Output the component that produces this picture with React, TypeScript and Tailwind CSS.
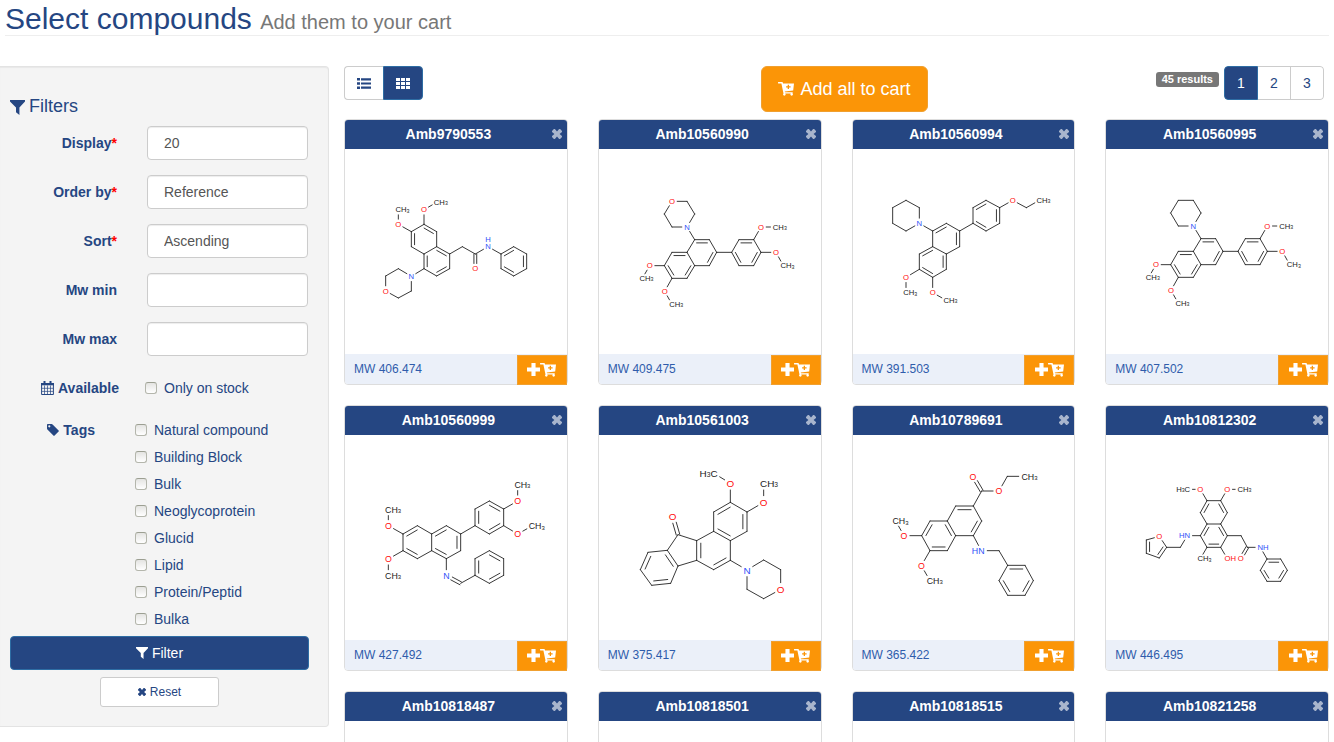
import type { ReactNode } from 'react';

/* ---------- icons ---------- */

type IconProps = { className?: string };

const FilterIcon = ({ className }: IconProps) => (
  <svg viewBox="0 0 14 14" className={className} fill="currentColor" aria-hidden="true">
    <path d="M0 0h14v1.400L8.800 7v7L5.600 11.400V7L0 1.400z" />
  </svg>
);

const ListIcon = ({ className }: IconProps) => (
  <svg viewBox="0 0 14 11" className={className} fill="currentColor" aria-hidden="true">
    <path d="M0 0h3v2.600H0zM4 .2h10v2.200H4zM0 4.200h3v2.600H0zM4 4.400h10v2.200H4zM0 8.400h3V11H0zM4 8.600h10v2.200H4z" />
  </svg>
);

const GridIcon = ({ className }: IconProps) => (
  <svg viewBox="0 0 14 11" className={className} fill="currentColor" aria-hidden="true">
    <path d="M0 0h4v3H0zM5 0h4v3H5zM10 0h4v3h-4zM0 4h4v3H0zM5 4h4v3H5zM10 4h4v3h-4zM0 8h4v3H0zM5 8h4v3H5zM10 8h4v3h-4z" />
  </svg>
);

const CrossIcon = ({ className }: IconProps) => (
  <svg viewBox="0 0 10 10" className={className} fill="currentColor" aria-hidden="true">
    <path d="M0 1.900 1.900 0h1L5 2.400 7.100 0h1L10 1.900v1L7.600 5 10 7.100v1L8.100 10h-1L5 7.600 2.900 10h-1L0 8.100v-1L2.400 5 0 2.900z" />
  </svg>
);

const PlusIcon = ({ className }: IconProps) => (
  <svg viewBox="0 0 12 12" className={className} fill="currentColor" aria-hidden="true">
    <path d="M4.100 0h3.800v4.100H12v3.800H7.900V12H4.100V7.900H0V4.100h4.100z" />
  </svg>
);

const CartIcon = ({ className }: IconProps) => (
  <svg viewBox="0 0 16 14" className={className} fill="currentColor" aria-hidden="true">
    <path
      fillRule="evenodd"
      d="M.5 0h4l.6 1.400H16l-.8 7.200-8.400.8.2.9h7.700v1.300h-.2a1.200 1.200 0 1 1-1.700 0H7.200a1.200 1.200 0 1 1-1.700 0L3.400 1.500H.5a.75.75 0 0 1 0-1.500zM9.700 2.700v1.600H8.100v1.200h1.600v1.600h1.300V5.500h1.600V4.300H11V2.700z"
    />
  </svg>
);

const CalendarIcon = ({ className }: IconProps) => (
  <svg viewBox="0 0 13 14" className={className} fill="none" stroke="currentColor" aria-hidden="true">
    <path d="M.6 2.500h11.800v11H.6z" strokeWidth="1" />
    <path d="M0 2h13v2.300H0z" fill="currentColor" stroke="none" />
    <path d="M3.500 0v3.500M9.500 0v3.500" strokeWidth="2" />
    <path d="M1 7.300h11M1 10.400h11M3.500 4.500v9M6.500 4.500v9M9.500 4.500v9" strokeWidth=".7" />
  </svg>
);

const TagIcon = ({ className }: IconProps) => (
  <svg viewBox="0 0 12 12" className={className} fill="currentColor" aria-hidden="true">
    <path
      fillRule="evenodd"
      d="M0 .8Q0 0 .8 0h3.800q.6 0 1 .4l6 6q.6.6 0 1.200l-4 4q-.6.6-1.200 0l-6-6Q0 5.200 0 4.600zM2.300 1.200a1.100 1.100 0 1 0 0 2.200 1.100 1.100 0 0 0 0-2.200z"
    />
  </svg>
);

/* ---------- structure drawings ---------- */

type Atom = [number, number, string?];
type Ring = { atoms: number[]; doubles?: number[] };
type Molecule = {
  view: [number, number];
  size: number;
  atoms: Atom[];
  rings: Ring[];
  bonds: [number, number, 2?][];
};

const RED = '#ff0d0d';
const BLUE = '#3050f8';
const INK = '#222222';

const labelInk = (label: string) =>
  label.startsWith('O') ? RED : label.includes('N') ? BLUE : INK;

function AtomLabel({ atom, bondSize }: { atom: Atom; bondSize: number }) {
  const [x, y, label = ''] = atom;
  const size = bondSize * 1.1;
  const half = size * 0.37;
  const base = y + size * 0.36;
  const common = { fontSize: size, fill: labelInk(label) };
  const sub = { fontSize: size * 0.68 };
  if (label === 'CH3')
    return (
      <text x={x - half} y={base} {...common}>
        CH<tspan {...sub} dy="1">3</tspan>
      </text>
    );
  if (label === 'H3C')
    return (
      <text x={x + half} y={base} textAnchor="end" {...common}>
        H<tspan {...sub} dy="1">3</tspan>
        <tspan dy="-1">C</tspan>
      </text>
    );
  if (label === 'N/H')
    return (
      <>
        <text x={x} y={base} textAnchor="middle" {...common}>N</text>
        <text x={x} y={base - bondSize} textAnchor="middle" {...common}>H</text>
      </>
    );
  if (label === 'HN')
    return <text x={x + half} y={base} textAnchor="end" {...common}>HN</text>;
  if (label.length === 2)
    return <text x={x - half} y={base} {...common}>{label}</text>;
  return <text x={x} y={base} textAnchor="middle" {...common}>{label}</text>;
}

function Structure({ molecule, name }: { molecule: Molecule; name: string }) {
  const { atoms, rings, bonds, size, view } = molecule;
  const lines: ReactNode[] = [];
  const seen = new Set<string>();

  const draw = (i: number, j: number, dx = 0, dy = 0, inset = 0) => {
    const [ax, ay, al] = atoms[i];
    const [bx, by, bl] = atoms[j];
    const len = Math.hypot(bx - ax, by - ay);
    const ux = (bx - ax) / len;
    const uy = (by - ay) / len;
    const s = al ? size * 0.74 : inset;
    const e = bl ? size * 0.74 : inset;
    lines.push(
      <line
        key={lines.length}
        x1={ax + ux * s + dx}
        y1={ay + uy * s + dy}
        x2={bx - ux * e + dx}
        y2={by - uy * e + dy}
      />,
    );
  };

  rings.forEach((ring) => {
    const n = ring.atoms.length;
    const cx = ring.atoms.reduce((t, a) => t + atoms[a][0], 0) / n;
    const cy = ring.atoms.reduce((t, a) => t + atoms[a][1], 0) / n;
    ring.atoms.forEach((a, k) => {
      const b = ring.atoms[(k + 1) % n];
      const key = [a, b].sort((p, q) => p - q).join('-');
      if (!seen.has(key)) {
        seen.add(key);
        draw(a, b);
      }
      if (ring.doubles?.includes(k)) {
        const mx = cx - (atoms[a][0] + atoms[b][0]) / 2;
        const my = cy - (atoms[a][1] + atoms[b][1]) / 2;
        const m = Math.hypot(mx, my);
        const gap = size * 0.46;
        draw(a, b, (mx / m) * gap, (my / m) * gap, size * 0.28);
      }
    });
  });

  bonds.forEach(([i, j, order]) => {
    if (order !== 2) return draw(i, j);
    const [ax, ay] = atoms[i];
    const [bx, by] = atoms[j];
    const len = Math.hypot(bx - ax, by - ay);
    const nx = (-(by - ay) / len) * size * 0.2;
    const ny = ((bx - ax) / len) * size * 0.2;
    draw(i, j, nx, ny);
    draw(i, j, -nx, -ny);
  });

  return (
    <svg
      viewBox={`${view[0]} ${view[1]} 600 615`}
      className="h-[205px] w-[200px]"
      role="img"
      aria-label={`Structure of ${name}`}
      fontFamily="'Liberation Sans', Arial, sans-serif"
    >
      <g stroke={INK} strokeWidth="2.7" strokeLinecap="round">{lines}</g>
      {atoms.map((atom, i) => (atom[2] ? <AtomLabel key={i} atom={atom} bondSize={size} /> : null))}
    </svg>
  );
}

const arylNaphthalene = (view: [number, number], hetero?: string): Molecule => ({
  view,
  size: 21,
  atoms: [
    [213, 154, hetero], [258, 154], [281, 192], [258, 231, 'N'], [213, 231], [190, 192],
    [281, 269], [325, 269], [347, 307], [325, 347], [281, 347], [258, 307],
    [258, 385], [213, 385], [190, 347], [213, 307],
    [146, 347, 'O'], [124, 385, 'CH3'], [191, 424, 'O'], [213, 463, 'CH3'],
    [392, 307], [414, 269], [458, 269], [480, 307], [458, 347], [414, 347],
    [480, 231, 'O'], [524, 231, 'CH3'], [525, 307, 'O'], [547, 347, 'CH3'],
  ],
  rings: [
    { atoms: [0, 1, 2, 3, 4, 5] },
    { atoms: [6, 7, 8, 9, 10, 11], doubles: [0, 2] },
    { atoms: [11, 10, 12, 13, 14, 15], doubles: [1, 3, 5] },
    { atoms: [20, 21, 22, 23, 24, 25], doubles: [1, 3, 5] },
  ],
  bonds: [[3, 6], [14, 16], [16, 17], [13, 18], [18, 19], [8, 20], [22, 26], [26, 27], [23, 28], [28, 29]],
});

const anilide: Molecule = {
  view: [31, -3],
  size: 21,
  atoms: [
    [158, 179, 'CH3'], [158, 223, 'O'], [197, 245], [235, 223], [235, 179, 'O'], [273, 157, 'CH3'],
    [273, 245], [273, 290], [235, 312], [197, 290], [235, 356], [273, 378], [312, 356], [312, 312],
    [350, 290], [389, 312], [389, 356, 'O'], [427, 290, 'N/H'],
    [466, 312], [504, 290], [543, 312], [543, 356], [504, 378], [466, 356],
    [197, 379, 'N'], [158, 356], [120, 378], [120, 423, 'O'], [158, 444], [197, 423],
  ],
  rings: [
    { atoms: [2, 3, 6, 7, 8, 9], doubles: [1, 5] },
    { atoms: [7, 8, 10, 11, 12, 13], doubles: [1, 3, 5] },
    { atoms: [18, 19, 20, 21, 22, 23], doubles: [0, 2, 4] },
    { atoms: [24, 25, 26, 27, 28, 29] },
  ],
  bonds: [[0, 1], [1, 2], [3, 4], [4, 5], [13, 14], [14, 15], [15, 16, 2], [15, 17], [17, 18], [10, 24]],
};

const ethoxyPhenyl: Molecule = {
  view: [39, -3],
  size: 21,
  atoms: [
    [168, 151], [208, 173], [208, 220, 'N'], [168, 243], [128, 220], [128, 173],
    [248, 243], [289, 220], [329, 243], [329, 290], [289, 312], [248, 290],
    [289, 358], [248, 382], [208, 358], [208, 312],
    [369, 220], [369, 173], [408, 151], [449, 173], [449, 220], [408, 243],
    [488, 151, 'O'], [529, 173], [568, 151, 'CH3'],
    [168, 382, 'O'], [168, 428, 'CH3'], [248, 428, 'O'], [289, 451, 'CH3'],
  ],
  rings: [
    { atoms: [0, 1, 2, 3, 4, 5] },
    { atoms: [6, 7, 8, 9, 10, 11], doubles: [0, 2] },
    { atoms: [11, 10, 12, 13, 14, 15], doubles: [1, 3, 5] },
    { atoms: [16, 17, 18, 19, 20, 21], doubles: [1, 3, 5] },
  ],
  bonds: [[2, 6], [8, 16], [19, 22], [22, 23], [23, 24], [14, 25], [25, 26], [13, 27], [27, 28]],
};

const benzylidene: Molecule = {
  view: [31, 3],
  size: 24,
  atoms: [
    [128, 227, 'CH3'], [128, 275, 'O'], [172, 300], [215, 275], [258, 300], [258, 350], [215, 374], [172, 350],
    [128, 375, 'O'], [128, 425, 'CH3'],
    [302, 275], [345, 300], [345, 350], [302, 374],
    [302, 425, 'N'], [345, 448], [388, 424], [388, 374], [431, 350], [474, 374], [474, 424], [431, 448],
    [388, 275], [388, 225], [431, 201], [474, 225], [474, 275], [431, 300],
    [516, 201, 'O'], [516, 152, 'CH3'], [516, 300, 'O'], [559, 276, 'CH3'],
  ],
  rings: [
    { atoms: [2, 3, 4, 5, 6, 7], doubles: [0, 4] },
    { atoms: [4, 10, 11, 12, 13, 5], doubles: [0, 2, 4] },
    { atoms: [16, 17, 18, 19, 20, 21], doubles: [0, 2, 4] },
    { atoms: [22, 23, 24, 25, 26, 27], doubles: [0, 2, 4] },
  ],
  bonds: [[0, 1], [1, 2], [7, 8], [8, 9], [13, 14], [14, 15, 2], [15, 16], [11, 22], [25, 28], [28, 29], [26, 30], [30, 31]],
};

const fluorenone: Molecule = {
  view: [27, 3],
  size: 27,
  atoms: [
    [339, 118, 'H3C'], [388, 148, 'O'], [388, 205], [438, 234], [438, 292], [388, 320], [338, 292], [338, 234],
    [488, 205, 'O'], [488, 148, 'CH3'],
    [388, 379], [338, 407], [287, 379], [287, 320],
    [231, 396], [199, 349], [231, 302], [215, 247, 'O'],
    [209, 448], [152, 454], [118, 407], [141, 355],
    [438, 408, 'N'], [488, 378], [539, 407], [539, 466, 'O'], [488, 494], [438, 466],
  ],
  rings: [
    { atoms: [2, 3, 4, 5, 6, 7], doubles: [1, 3, 5] },
    { atoms: [6, 5, 10, 11, 12, 13], doubles: [2, 4] },
    { atoms: [13, 12, 14, 15, 16] },
    { atoms: [15, 14, 18, 19, 20, 21], doubles: [0, 2, 4] },
    { atoms: [22, 23, 24, 25, 26, 27] },
  ],
  bonds: [[0, 1], [1, 2], [3, 8], [8, 9], [16, 17, 2], [10, 22]],
};

const benzylamine: Molecule = {
  view: [39, 3],
  size: 24,
  atoms: [
    [215, 305], [240, 261], [292, 261], [317, 305], [292, 350], [240, 350],
    [317, 216], [370, 216], [395, 261], [370, 305],
    [395, 171], [369, 127, 'O'], [447, 171, 'O'], [472, 127], [524, 127, 'CH3'],
    [162, 305, 'O'], [137, 261, 'CH3'], [214, 395, 'O'], [240, 440, 'CH3'],
    [394, 350, 'HN'], [447, 350], [473, 394], [525, 394], [550, 440], [525, 484], [473, 484], [447, 440],
  ],
  rings: [
    { atoms: [0, 1, 2, 3, 4, 5], doubles: [0, 2, 4] },
    { atoms: [2, 6, 7, 8, 9, 3], doubles: [1, 3] },
    { atoms: [21, 22, 23, 24, 25, 26], doubles: [0, 2, 4] },
  ],
  bonds: [[7, 10], [10, 11, 2], [10, 12], [12, 13], [13, 14], [0, 15], [15, 16], [5, 17], [17, 18], [9, 19], [19, 20], [20, 21]],
};

const furfurylamine: Molecule = {
  view: [51, 3],
  size: 21,
  atoms: [
    [262, 166, 'H3C'], [301, 166, 'O'], [321, 200], [362, 200], [382, 236], [362, 270], [321, 270], [301, 236],
    [382, 166, 'O'], [421, 166, 'CH3'],
    [382, 305], [362, 340], [321, 340], [301, 305],
    [262, 305, 'HN'], [241, 340], [200, 340], [178, 372], [139, 358], [139, 318], [178, 307, 'O'],
    [301, 374, 'CH3'], [382, 374, 'OH'],
    [423, 305], [442, 340], [422, 374, 'O'], [481, 340, 'NH'],
    [501, 375], [542, 375], [562, 409], [542, 442], [501, 442], [481, 409],
  ],
  rings: [
    { atoms: [2, 3, 4, 5, 6, 7], doubles: [1, 5] },
    { atoms: [6, 5, 10, 11, 12, 13], doubles: [1, 3, 5] },
    { atoms: [16, 17, 18, 19, 20], doubles: [0, 2] },
    { atoms: [27, 28, 29, 30, 31, 32], doubles: [0, 2, 4] },
  ],
  bonds: [[0, 1], [1, 2], [3, 8], [8, 9], [13, 14], [14, 15], [15, 16], [12, 21], [11, 22], [10, 23], [23, 24], [24, 25, 2], [24, 26], [26, 27]],
};

/* ---------- data ---------- */

type Compound = { name: string; weight?: string; molecule?: Molecule };

const compounds: Compound[] = [
  { name: 'Amb9790553', weight: '406.474', molecule: anilide },
  { name: 'Amb10560990', weight: '409.475', molecule: arylNaphthalene([27, -3], 'O') },
  { name: 'Amb10560994', weight: '391.503', molecule: ethoxyPhenyl },
  { name: 'Amb10560995', weight: '407.502', molecule: arylNaphthalene([29, 0]) },
  { name: 'Amb10560999', weight: '427.492', molecule: benzylidene },
  { name: 'Amb10561003', weight: '375.417', molecule: fluorenone },
  { name: 'Amb10789691', weight: '365.422', molecule: benzylamine },
  { name: 'Amb10812302', weight: '446.495', molecule: furfurylamine },
  { name: 'Amb10818487' },
  { name: 'Amb10818501' },
  { name: 'Amb10818515' },
  { name: 'Amb10821258' },
];

const selects = [
  { id: 'display', label: 'Display', options: ['20', '50', '100'] },
  { id: 'order', label: 'Order by', options: ['Reference', 'Mw'] },
  { id: 'sort', label: 'Sort', options: ['Ascending', 'Descending'] },
];

const ranges = [
  { id: 'mw-min', label: 'Mw min' },
  { id: 'mw-max', label: 'Mw max' },
];

const tags = [
  'Natural compound',
  'Building Block',
  'Bulk',
  'Neoglycoprotein',
  'Glucid',
  'Lipid',
  'Protein/Peptid',
  'Bulka',
];

/* ---------- parts ---------- */

const field =
  'h-[34px] min-w-0 flex-1 appearance-none rounded border border-[#cccccc] bg-white px-4 text-sm text-[#555555] shadow-[inset_0_1px_1px_rgba(0,0,0,0.075)] outline-none focus:border-[#66afe9]';

const Checkbox = ({ id }: { id: string }) => (
  <input
    id={id}
    type="checkbox"
    className="size-3 shrink-0 appearance-none rounded-[3px] border border-[#b4b6ac] border-t-[#9c9f92] bg-linear-to-b from-[#e4e4e2] to-white checked:bg-[#254682] checked:from-[#254682] checked:to-[#254682]"
  />
);

function Filters() {
  return (
    <form
      className="w-[329px] shrink-0 rounded-r border border-l-0 border-[#e3e3e3] bg-[#f4f4f4] pt-[29px] pr-[19px] pb-[19px] shadow-[inset_0_1px_1px_rgba(0,0,0,0.05)]"
      onSubmit={(e) => e.preventDefault()}
    >
      <h2 className="mb-2.5 flex items-center gap-1 pl-2.5 text-lg leading-5">
        <FilterIcon className="mt-0.5 size-[15px]" />
        Filters
      </h2>

      <div className="flex flex-col gap-[15px] pr-px">
        {selects.map((s) => (
          <div key={s.id} className="flex items-center gap-[30px]">
            <label htmlFor={s.id} className="w-[117px] text-right font-bold">
              {s.label}
              <span className="text-[#ff0000]">*</span>
            </label>
            <select id={s.id} className={field}>
              {s.options.map((o) => (
                <option key={o}>{o}</option>
              ))}
            </select>
          </div>
        ))}
        {ranges.map((r) => (
          <div key={r.id} className="flex items-center gap-[30px]">
            <label htmlFor={r.id} className="w-[117px] text-right font-bold">
              {r.label}
            </label>
            <input id={r.id} type="text" className={field} />
          </div>
        ))}
        <div className="flex h-[34px] items-center">
          <span className="flex w-[119px] items-center justify-end gap-1 font-bold">
            <CalendarIcon className="h-3.5 w-[13px]" />
            Available
          </span>
          <label htmlFor="stock" className="ml-[26px] flex items-center gap-[7px]">
            <Checkbox id="stock" />
            Only on stock
          </label>
        </div>
      </div>

      <fieldset className="mt-[11px] flex">
        <legend className="float-left flex h-[27px] w-[95px] items-center justify-end gap-1 font-bold">
          <TagIcon className="size-3" />
          Tags
        </legend>
        <div className="ml-10 flex flex-col">
          {tags.map((tag) => (
            <label key={tag} htmlFor={tag} className="flex h-[27px] items-center gap-[7px]">
              <Checkbox id={tag} />
              {tag}
            </label>
          ))}
        </div>
      </fieldset>

      <div className="mt-1 flex flex-col items-center gap-[7px] pl-2.5">
        <button
          type="submit"
          className="flex h-[34px] w-full items-center justify-center gap-1 rounded border border-[#2e6da4] bg-[#254682] text-white"
        >
          <FilterIcon className="size-3" />
          Filter
        </button>
        <button
          type="reset"
          className="flex h-[30px] w-[119px] items-center justify-center gap-1 rounded-[3px] border border-[#cccccc] bg-white text-xs"
        >
          <CrossIcon className="size-2" />
          Reset
        </button>
      </div>
    </form>
  );
}

function Toolbar() {
  return (
    <div className="grid grid-cols-[1fr_auto_1fr] items-start">
      <div className="flex">
        <button
          aria-label="List view"
          className="flex h-[34px] w-[39px] items-center justify-center rounded-l border border-r-0 border-[#cccccc] bg-white"
        >
          <ListIcon className="h-[11px] w-3.5" />
        </button>
        <button
          aria-label="Grid view"
          className="flex h-[34px] w-10 items-center justify-center rounded-r border border-[#2e6da4] bg-[#254682] text-white"
        >
          <GridIcon className="h-[11px] w-3.5" />
        </button>
      </div>

      <div className="pl-4">
        <button className="flex h-[46px] items-center gap-1.5 rounded-md border border-[#f0a030] bg-[#fb9507] px-4 text-lg text-white">
          <CartIcon className="h-3.5 w-4" />
          Add all to cart
        </button>
      </div>

      <div className="flex justify-end gap-[5px] pr-[5px]">
        <span className="mt-1.5 h-[15px] rounded-[3px] bg-[#777777] px-1.5 text-[11px] leading-[15px] font-bold text-white">
          45 results
        </span>
        <nav aria-label="Pages" className="flex h-[34px] overflow-hidden rounded">
          <a href="#1" aria-current="page" className="flex w-[34px] items-center justify-center rounded-l border border-[#2e6da4] bg-[#254682] text-white">
            1
          </a>
          <a href="#2" className="flex w-[33px] items-center justify-center border-y border-r border-[#cccccc] bg-white">
            2
          </a>
          <a href="#3" className="flex w-[33px] items-center justify-center rounded-r border-y border-r border-[#cccccc] bg-white">
            3
          </a>
        </nav>
      </div>
    </div>
  );
}

function CompoundCard({ name, weight, molecule }: Compound) {
  return (
    <article className="rounded border border-[#dddddd] bg-white">
      <header className="flex h-[29px] items-center rounded-t-[3px] bg-[#254682] pr-[5px] pb-0.5 text-white">
        <h3 className="flex-1 text-center font-bold">{name}</h3>
        <button aria-label={`Remove ${name}`} className="text-[#a8b5cd]">
          <CrossIcon className="size-[10px]" />
        </button>
      </header>
      <div className="flex h-[205px] justify-center">
        {molecule && <Structure molecule={molecule} name={name} />}
      </div>
      <footer className="flex h-[30px] items-center rounded-b-[3px] bg-[#ebf0f9] pl-[9px] text-xs text-[#2f5cab]">
        {weight && <>MW {weight}</>}
        <button
          aria-label={`Add ${name} to cart`}
          className="mt-px ml-auto flex h-[30px] w-[50px] items-center justify-center border border-[#f0a030] bg-[#fb9507] text-white"
        >
          <PlusIcon className="size-[13px]" />
          <CartIcon className="h-3.5 w-4" />
        </button>
      </footer>
    </article>
  );
}

export default function App() {
  return (
    <div className="min-h-screen bg-white font-['Liberation_Sans',Arial,sans-serif] text-sm leading-5 text-[#254682]">
      <header className="mx-[5px] h-9 border-b border-[#eeeeee]">
        <h1 className="text-3xl leading-[37px]">
          Select compounds <small className="text-xl leading-none text-[#777777]">Add them to your cart</small>
        </h1>
      </header>

      <div className="mt-[30px] flex items-start gap-[15px] pr-[5px]">
        <Filters />
        <main className="min-w-0 flex-1">
          <Toolbar />
          <section className="mt-[7px] grid grid-cols-4 gap-x-[30px] gap-y-5">
            {compounds.map((c) => (
              <CompoundCard key={c.name} {...c} />
            ))}
          </section>
        </main>
      </div>
    </div>
  );
}
